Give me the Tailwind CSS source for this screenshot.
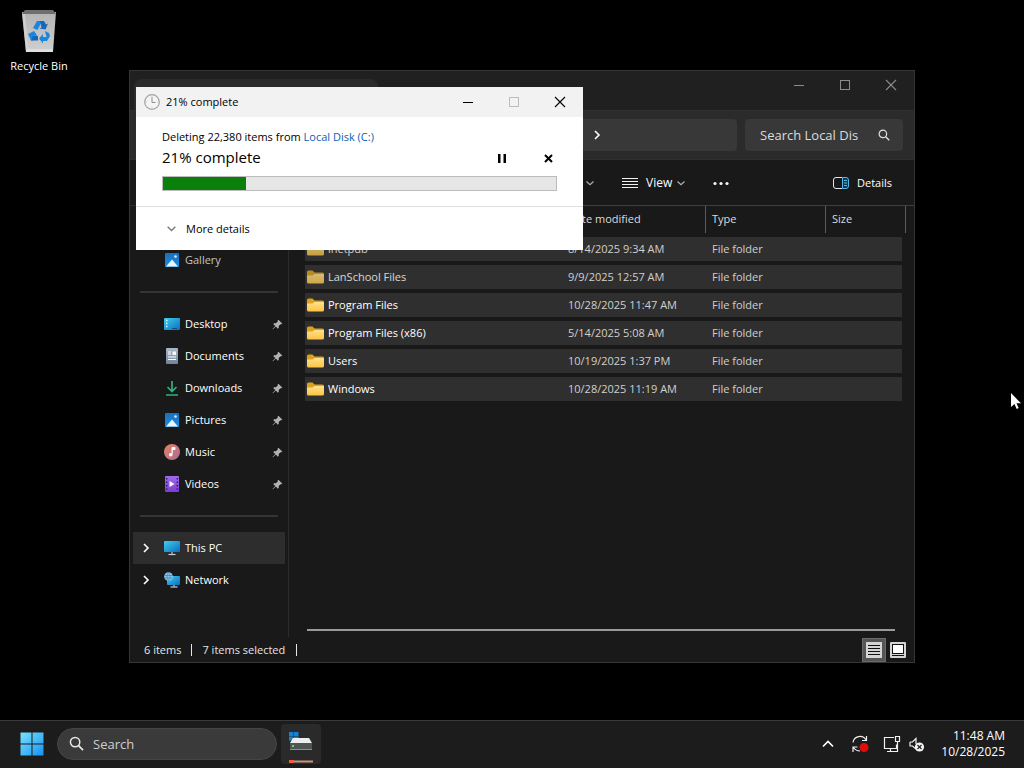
<!DOCTYPE html>
<html lang="en">
<head>
  <meta charset="UTF-8">
  <meta name="viewport" content="width=device-width, initial-scale=1.0">
  <title>Desktop</title>
  <script src="https://cdn.jsdelivr.net/npm/@tailwindcss/browser@4"></script>
</head>
<body class="bg-black text-white font-['Open_Sans','Noto_Sans',sans-serif] text-[11px] leading-4 cursor-default overflow-hidden">

  <!-- Shared icons -->
  <svg width="0" height="0" class="absolute" aria-hidden="true">
    <defs>
      <linearGradient id="g-blue" x1="0" y1="0" x2="1" y2="1"><stop offset="0" stop-color="#3fd0ea"/><stop offset="1" stop-color="#0a6cc4"/></linearGradient>
      <linearGradient id="g-pic" x1="0" y1="0" x2="0" y2="1"><stop offset="0" stop-color="#1a6fc0"/><stop offset="1" stop-color="#1c8fdc"/></linearGradient>
      <linearGradient id="g-doc" x1="0" y1="0" x2="0" y2="1"><stop offset="0" stop-color="#a9b9ca"/><stop offset="1" stop-color="#71839a"/></linearGradient>
      <linearGradient id="g-music" x1="0" y1="0" x2="1" y2="1"><stop offset="0" stop-color="#e8835a"/><stop offset="1" stop-color="#a86a9c"/></linearGradient>
      <linearGradient id="g-video" x1="0" y1="0" x2="0" y2="1"><stop offset="0" stop-color="#a06be8"/><stop offset="1" stop-color="#7a3fd0"/></linearGradient>
      <linearGradient id="g-folder" x1="0" y1="0" x2="0" y2="1"><stop offset="0" stop-color="#ffe08a"/><stop offset="1" stop-color="#fcc445"/></linearGradient>
      <linearGradient id="g-bin" x1="0" y1="0" x2="0" y2="1"><stop offset="0" stop-color="#b4b4b4"/><stop offset="1" stop-color="#cfcfcf"/></linearGradient>
      <linearGradient id="g-start" gradientUnits="userSpaceOnUse" x1="0" y1="0" x2="24" y2="24"><stop offset="0" stop-color="#7be3ff"/><stop offset="1" stop-color="#1391f0"/></linearGradient>
    </defs>
    <symbol id="i-picture" viewBox="0 0 16 16"><rect x="1" y="1" width="14" height="14" rx="1" fill="url(#g-pic)"/><path d="M2 14.500 8 7.500l6 7z" fill="#e6f4ff"/><circle cx="11.500" cy="4.500" r="1.300" fill="#d8eeff"/></symbol>
    <symbol id="i-desktop" viewBox="0 0 16 16"><rect y="2" width="16" height="12" rx="1" fill="url(#g-blue)"/><path d="M2 4.500h1.500M2 7.500h1.500M2 10.500h1.500" stroke="#d9fbff" stroke-width="1.300"/><path d="M8 12.500h5" stroke="#0c4f94" stroke-width="1"/></symbol>
    <symbol id="i-document" viewBox="0 0 16 16"><rect x="2" y="0" width="12" height="16" rx="1" fill="url(#g-doc)"/><path d="M4 4h3M4 6h3M4 9h8M4 11.500h8" stroke="#fff" stroke-width="1.200"/><path d="M8.500 3.500h3.500v3.500H8.500z" fill="#f4f8fc"/></symbol>
    <symbol id="i-download" viewBox="0 0 16 16"><path d="M8 1v10M3.500 7 8 11.500 12.500 7M2 15h12" fill="none" stroke="#2fb280" stroke-width="1.700"/></symbol>
    <symbol id="i-music" viewBox="0 0 16 16"><circle cx="8" cy="8" r="8" fill="url(#g-music)"/><path d="M8 10.500V3.500h3v2H8.800" fill="#fff" stroke="#fff" stroke-width="1"/><circle cx="6.700" cy="10.700" r="1.800" fill="#fff"/></symbol>
    <symbol id="i-video" viewBox="0 0 16 16"><rect x="1" width="14" height="16" rx="1" fill="url(#g-video)"/><path d="M5.500 5v6l5-3z" fill="#fff"/><path d="M2.700 2v12M13.300 2v12" stroke="#3d1a80" stroke-width="1.500" stroke-dasharray="1.600 1.800"/></symbol>
    <symbol id="i-pc" viewBox="0 0 16 16"><rect y="1" width="16" height="11" rx="1" fill="url(#g-blue)"/><path d="M7 12h2v2H7z" fill="#7d8b96"/><path d="M4.500 14.500h7" stroke="#c4ced6" stroke-width="1.200"/></symbol>
    <symbol id="i-network" viewBox="0 0 16 16"><rect x="3" y="4" width="13" height="9" rx="1" fill="url(#g-blue)"/><path d="M9 13h2v1.500H9z" fill="#7d8b96"/><path d="M6.500 15h7" stroke="#c4ced6" stroke-width="1.200"/><circle cx="4.500" cy="4.500" r="4.300" fill="#8cc8ea"/><path d="M1 3.500h7M1 6h7M4.500.500c-2 2.500-2 5.500 0 8M4.500.500c2 2.500 2 5.500 0 8" fill="none" stroke="#2f7fb5" stroke-width=".7"/></symbol>
    <symbol id="i-folder" viewBox="0 0 17 14"><path d="M0 2q0-1.500 1.500-1.500h4L7.500 2.500h8Q17 2.500 17 4v2H0z" fill="#dca21c"/><path d="M0 5.500h5.500l2-1.500H17v8q0 1.500-1.500 1.500h-14Q0 13.500 0 12z" fill="url(#g-folder)"/></symbol>
    <symbol id="i-pin" viewBox="0 0 12 12"><path d="M7 .8 11.200 5l-.9.700-1-.1-2 2.100.1 1.900-.9.900-2.400-2.300L1 11.300l-.5-.5 3.100-3.100L1.300 5.400l.9-.8 2 .1 2.100-2-.1-1.100z" fill="#aeb3b8"/></symbol>
    <symbol id="i-right" viewBox="0 0 10 10"><path d="M3 1l4 4-4 4" fill="none" stroke="currentColor" stroke-width="1.600"/></symbol>
    <symbol id="i-down" viewBox="0 0 10 10"><path d="M1.500 3.500 5 6.800l3.500-3.300" fill="none" stroke="currentColor" stroke-width="1.200"/></symbol>
    <symbol id="i-search" viewBox="0 0 16 16"><circle cx="6.500" cy="6.500" r="5" fill="none" stroke="currentColor" stroke-width="1.600"/><path d="M10.200 10.200 15 15" stroke="currentColor" stroke-width="1.800"/></symbol>
    <symbol id="i-close" viewBox="0 0 12 12"><path d="M1 1l10 10M11 1 1 11" stroke="currentColor" stroke-width="1.100"/></symbol>
    <symbol id="i-max" viewBox="0 0 12 12"><rect x="1.500" y="1.500" width="9" height="9" fill="none" stroke="currentColor"/></symbol>
    <symbol id="i-min" viewBox="0 0 12 12"><path d="M1 6.500h10" stroke="currentColor"/></symbol>
  </svg>

  <div class="h-screen flex flex-col">
    <!-- Desktop -->
    <main class="relative flex-1 min-h-0">
      <button class="absolute left-0 top-2 w-[78px] flex flex-col items-center gap-1">
        <svg class="w-[38px] h-[46px]" viewBox="0 0 38 46">
          <path d="M2 4 36 4 33 44H6z" fill="url(#g-bin)"/>
          <path d="M5 2h28l3 4H2z" fill="#6e6e6e"/>
          <path d="M2 6 6 44H9L5 6z" fill="#d8d8d8" opacity=".6"/>
          <path d="M6 41h27l-.3 3H6.300z" fill="#dedede"/>
          <g fill="#1c86dc">
            <path d="M13 20l4-7h5l-4.500 9z"/><path d="M20 13h4l2 3.500 2-1-2.500 6-6-1 2-1z" fill="#1468b8"/>
            <path d="M8 26l6-3 3.500 5-2-.5-2.500 5H11z"/><path d="M11 32.500h7v-4.500H13z" fill="#1468b8"/>
            <path d="M25 23l4 2 1 3-3 5h-4v2.500l-4-5 4-4.500V29h3.500z"/>
          </g>
        </svg>
        <span>Recycle Bin</span>
      </button>

      <!-- Explorer window -->
      <section class="absolute left-[129px] right-[109px] top-[70px] bottom-[57px] flex flex-col bg-[#191919] border border-[#353535]">
        <header class="h-[39px] shrink-0 flex items-start justify-end bg-[#202020] text-[#8c8c8c] relative">
          <div class="absolute left-1 top-2 bottom-0 w-[244px] rounded-t-lg bg-[#2b2b2b]"></div>
          <button class="w-[46px] h-7 grid place-items-center" aria-label="Minimize"><svg class="size-3"><use href="#i-min"/></svg></button>
          <button class="w-[46px] h-7 grid place-items-center" aria-label="Maximize"><svg class="size-3"><use href="#i-max"/></svg></button>
          <button class="w-[46px] h-7 grid place-items-center" aria-label="Close"><svg class="size-3"><use href="#i-close"/></svg></button>
        </header>

        <div class="h-[49px] shrink-0 flex items-center gap-2 pr-[11px] bg-[#2b2b2b] border-t border-[#303030]">
          <div class="flex-1 h-8 ml-[150px] flex items-center rounded bg-[#383838]">
            <button class="ml-[312px]" aria-label="Expand path"><svg class="size-[10px]"><use href="#i-right"/></svg></button>
          </div>
          <form class="w-[158px] h-8 flex items-center rounded bg-[#383838] pl-[15px] pr-[13px]">
            <input type="text" aria-label="Search Local Disk (C:)" placeholder="Search Local Disk (C:)" class="w-[98px] text-[13px] outline-none placeholder:text-[#dcdcdc]">
            <button type="button" class="ml-auto text-[#e0e0e0]" aria-label="Search"><svg class="w-3 h-3" viewBox="0 0 16 16"><use href="#i-search"/></svg></button>
          </form>
        </div>

        <div class="h-[46px] shrink-0 flex items-center pl-[455px] pr-[22px] border-t border-[#2f2f2f]">
          <svg class="w-[10px] h-[10px] text-[#b0b0b0]"><use href="#i-down"/></svg>
          <button class="ml-[27px] flex items-center">
            <svg class="w-4 h-4" viewBox="0 0 16 16"><path d="M0 3.500h16M0 6.500h16M0 9.500h16M0 12.500h16" stroke="#f0f0f0"/></svg>
            <span class="ml-2 text-[12px]">View</span>
            <svg class="w-[10px] h-[10px] ml-1 text-[#b0b0b0]"><use href="#i-down"/></svg>
          </button>
          <button class="ml-[26px]" aria-label="See more"><svg class="w-[18px] h-4" viewBox="0 0 18 16"><g fill="#f5f5f5"><circle cx="3" cy="8.500" r="1.600"/><circle cx="9" cy="8.500" r="1.600"/><circle cx="15" cy="8.500" r="1.600"/></g></svg></button>
          <button class="ml-auto flex items-center gap-2">
            <svg class="w-4 h-4" viewBox="0 0 16 16"><path d="M9 2.500H3Q.500 2.500.500 5v6Q.500 13.500 3 13.500h6" fill="none" stroke="#e4e4e4"/><path d="M9.500 2.500H13q2.500 0 2.500 2.500v6q0 2.500-2.500 2.500H9.500z" fill="#11384c" stroke="#58b8e8"/><path d="M11 5.500h3M11 8h3M11 10.500h3" stroke="#58b8e8"/></svg>
            <span>Details</span>
          </button>
        </div>

        <div class="flex-1 min-h-0 flex">
          <nav class="w-[159px] shrink-0 pt-[38px] pl-[3px] pr-[3px] border-r border-t border-[#2b2b2b]">
            <a href="#gallery" class="h-8 flex items-center gap-[5px] pl-[31px] text-[#c4c4c4]"><svg class="size-4"><use href="#i-picture"/></svg>Gallery</a>
            <hr class="my-[15px] h-[2px] ml-[7px] mr-[7px] border-0 bg-[#353535]">
            <a href="#desktop" class="h-8 flex items-center gap-[5px] pl-[31px] pr-[2px]"><svg class="size-4"><use href="#i-desktop"/></svg>Desktop<svg class="size-[11px] ml-auto"><use href="#i-pin"/></svg></a>
            <a href="#documents" class="h-8 flex items-center gap-[5px] pl-[31px] pr-[2px]"><svg class="size-4"><use href="#i-document"/></svg>Documents<svg class="size-[11px] ml-auto"><use href="#i-pin"/></svg></a>
            <a href="#downloads" class="h-8 flex items-center gap-[5px] pl-[31px] pr-[2px]"><svg class="size-4"><use href="#i-download"/></svg>Downloads<svg class="size-[11px] ml-auto"><use href="#i-pin"/></svg></a>
            <a href="#pictures" class="h-8 flex items-center gap-[5px] pl-[31px] pr-[2px]"><svg class="size-4"><use href="#i-picture"/></svg>Pictures<svg class="size-[11px] ml-auto"><use href="#i-pin"/></svg></a>
            <a href="#music" class="h-8 flex items-center gap-[5px] pl-[31px] pr-[2px]"><svg class="size-4"><use href="#i-music"/></svg>Music<svg class="size-[11px] ml-auto"><use href="#i-pin"/></svg></a>
            <a href="#videos" class="h-8 flex items-center gap-[5px] pl-[31px] pr-[2px]"><svg class="size-4"><use href="#i-video"/></svg>Videos<svg class="size-[11px] ml-auto"><use href="#i-pin"/></svg></a>
            <hr class="my-[15px] h-[2px] ml-[7px] mr-[7px] border-0 bg-[#353535]">
            <a href="#pc" class="h-8 flex items-center pl-2 bg-[#2d2d2d]"><svg class="size-[10px] mr-[13px]"><use href="#i-right"/></svg><svg class="size-4 mr-[5px]"><use href="#i-pc"/></svg>This PC</a>
            <a href="#network" class="h-8 flex items-center pl-2"><svg class="size-[10px] mr-[13px]"><use href="#i-right"/></svg><svg class="size-4 mr-[5px]"><use href="#i-network"/></svg>Network</a>
          </nav>

          <div class="flex-1 min-w-0 flex flex-col border-t border-[#3f3f3f] pl-4 pr-2">
            <table class="w-full table-fixed -mt-1 border-separate border-spacing-x-0 border-spacing-y-1 text-left">
              <thead>
                <tr class="h-[27px] text-[#dcdcdc] [&>th]:font-normal [&>th]:p-0 [&>th]:pb-[2px] [&>th]:border-r [&>th]:border-[#5a5a5a]">
                  <th class="w-[256px]"><span class="pl-6">Name</span></th>
                  <th class="w-[145px]"><span class="pl-[7px]">Date modified</span></th>
                  <th class="w-[120px]"><span class="pl-[6px]">Type</span></th>
                  <th><span class="pl-[6px]">Size</span></th>
                </tr>
              </thead>
              <tbody class="[&>tr]:h-6 [&_td]:p-0 [&_td]:bg-[#2f2f2f] [&_td]:text-[#cfcfcf] [&_td:last-child]:border-r-4 [&_td:last-child]:border-[#191919]">
                <tr><td><div class="flex items-center gap-1 pl-[2px] opacity-75"><svg class="w-[17px] h-[14px]"><use href="#i-folder"/></svg><span class="text-white">inetpub</span></div></td><td><span class="pl-[7px]">8/14/2025 9:34 AM</span></td><td><span class="pl-[6px]">File folder</span></td><td></td></tr>
                <tr><td><div class="flex items-center gap-1 pl-[2px] opacity-80"><svg class="w-[17px] h-[14px]"><use href="#i-folder"/></svg><span class="text-white">LanSchool Files</span></div></td><td><span class="pl-[7px]">9/9/2025 12:57 AM</span></td><td><span class="pl-[6px]">File folder</span></td><td></td></tr>
                <tr><td><div class="flex items-center gap-1 pl-[2px]"><svg class="w-[17px] h-[14px]"><use href="#i-folder"/></svg><span class="text-white">Program Files</span></div></td><td><span class="pl-[7px]">10/28/2025 11:47 AM</span></td><td><span class="pl-[6px]">File folder</span></td><td></td></tr>
                <tr><td><div class="flex items-center gap-1 pl-[2px]"><svg class="w-[17px] h-[14px]"><use href="#i-folder"/></svg><span class="text-white">Program Files (x86)</span></div></td><td><span class="pl-[7px]">5/14/2025 5:08 AM</span></td><td><span class="pl-[6px]">File folder</span></td><td></td></tr>
                <tr><td><div class="flex items-center gap-1 pl-[2px]"><svg class="w-[17px] h-[14px]"><use href="#i-folder"/></svg><span class="text-white">Users</span></div></td><td><span class="pl-[7px]">10/19/2025 1:37 PM</span></td><td><span class="pl-[6px]">File folder</span></td><td></td></tr>
                <tr><td><div class="flex items-center gap-1 pl-[2px]"><svg class="w-[17px] h-[14px]"><use href="#i-folder"/></svg><span class="text-white">Windows</span></div></td><td><span class="pl-[7px]">10/28/2025 11:19 AM</span></td><td><span class="pl-[6px]">File folder</span></td><td></td></tr>
              </tbody>
            </table>
            <div class="mt-auto mb-[6px] ml-[2px] mr-[11px] h-[2px] bg-[#9a9a9a]"></div>
          </div>
        </div>

        <footer class="h-[25px] shrink-0 flex items-center pl-[14px] pr-1 text-[#e6e6e6]">
          <span>6 items</span>
          <span class="mx-[10px] w-px h-3 bg-[#e6e6e6]"></span>
          <span>7 items selected</span>
          <span class="mx-[11px] w-px h-3 bg-[#e6e6e6]"></span>
          <button class="ml-auto w-6 h-6 grid place-items-center bg-[#555] border border-[#6a6a6a]" aria-label="Details view"><svg class="w-4 h-4" viewBox="0 0 16 16"><rect width="16" height="16" fill="#d4d4d4"/><path d="M2 3.500h12M2 6.500h12M2 9.500h12M2 12.500h12" stroke="#111"/></svg></button>
          <button class="w-6 h-6 grid place-items-center" aria-label="Large icons view"><svg class="w-4 h-4" viewBox="0 0 16 16"><rect width="16" height="16" rx="1" fill="#d4d4d4"/><rect x="2.500" y="2.500" width="11" height="9" fill="#fff" stroke="#111"/><path d="M2 13.500h12" stroke="#111"/></svg></button>
        </footer>
      </section>

      <!-- Delete progress dialog -->
      <section role="dialog" aria-label="21% complete" class="absolute left-[136px] top-[87px] w-[447px] bg-white text-black">
        <header class="h-[30px] flex items-center pl-2 bg-[#f2f2f2]">
          <svg class="size-4" viewBox="0 0 16 16"><circle cx="8" cy="8" r="7.300" fill="#f4f4f4" stroke="#a3a3a3" stroke-width="1.200"/><path d="M8 3v5.500h3.500" fill="none" stroke="#8f8f8f"/><path d="M8 1.500v1M8 13.500v1M1.500 8h1M13.500 8h1" stroke="#b5b5b5"/></svg>
          <span class="ml-[6px]">21% complete</span>
          <button class="ml-auto w-[46px] h-[30px] grid place-items-center" aria-label="Minimize"><svg class="size-3"><use href="#i-min"/></svg></button>
          <button class="w-[46px] h-[30px] grid place-items-center text-[#bdbdbd]" aria-label="Maximize" disabled><svg class="size-3"><use href="#i-max"/></svg></button>
          <button class="w-[46px] h-[30px] grid place-items-center" aria-label="Close"><svg class="size-3"><use href="#i-close"/></svg></button>
        </header>
        <div class="pl-[26px] pr-[26px] pt-3 pb-[15px]">
          <p>Deleting 22,380 items from <a href="#disk" class="text-[#0a5fb4]">Local Disk (C:)</a></p>
          <div class="flex items-center h-[26px]">
            <label for="progress" class="text-[15px] leading-5 pb-[2px]">21% complete</label>
            <button class="ml-auto w-[46px] grid place-items-center" aria-label="Pause"><svg class="w-2 h-[9px]" viewBox="0 0 8 9"><path d="M0 0h2.500v9H0zM5.500 0H8v9H5.500z"/></svg></button>
            <button class="w-[46px] -mr-[14px] grid place-items-center" aria-label="Cancel"><svg class="size-[9px]" viewBox="0 0 9 9"><path d="M1 1l7 7M8 1 1 8" stroke="#000" stroke-width="2"/></svg></button>
          </div>
          <progress id="progress" value="21" max="100" class="mt-[5px] block w-full h-[15px] appearance-none border border-[#bcbcbc] bg-[#e6e6e6] [&::-webkit-progress-bar]:bg-[#e6e6e6] [&::-webkit-progress-value]:bg-[#0a800a]">21%</progress>
        </div>
        <footer class="h-11 flex items-center pl-[30px] border-t border-[#dfdfdf]">
          <button class="flex items-center gap-[9px]"><svg class="size-[11px] text-[#777]"><use href="#i-down"/></svg>More details</button>
        </footer>
      </section>

      <!-- Mouse pointer -->
      <svg class="absolute right-[2px] top-[392px] w-3 h-[18px]" viewBox="0 0 12 18"><path d="M1 1v14l3.500-3 2.200 5 2-.9-2.200-4.800H11z" fill="#fff"/></svg>
    </main>

    <!-- Taskbar -->
    <footer class="h-12 shrink-0 flex items-center pl-5 pr-[19px] pb-[2px] bg-[#1c1c1c] border-t border-[#3a3a3a]">
      <button aria-label="Start"><svg class="size-6" viewBox="0 0 24 24"><path d="M.500.500h11v11H.500zM12.500.500h11v11h-11zM.500 12.500h11v11H.500zM12.500 12.500h11v11h-11z" fill="url(#g-start)"/></svg></button>
      <label class="ml-[13px] w-[220px] h-8 flex items-center gap-[9px] pl-[11px] rounded-full bg-[#3a3a3a] border border-[#454545]">
        <svg class="w-[15px] h-[15px] text-[#e8e8e8]" viewBox="0 0 16 16"><use href="#i-search"/></svg>
        <input type="text" placeholder="Search" aria-label="Search" class="w-[150px] text-[13px] outline-none placeholder:text-[#cfcfcf]">
      </label>
      <button class="ml-1 w-10 h-10 grid place-items-center rounded bg-[#2a2a2a]" aria-label="File Explorer">
        <svg class="w-6 h-10" viewBox="0 0 24 40">
          <path d="M0 8h4.500v4H0zM5 8h4.500v4H5zM0 12.500h4.500v4H0zM5 12.500h4.500v4H5z" fill="#1582d4"/>
          <path d="M4 14h16l3 5H1z" fill="#ededed"/><path d="M1 19h22v6H1z" fill="#4e5554"/><path d="M3 21h2v2H3z" fill="#6fcf70"/>
          <path d="M1 25.500h22" stroke="#8b8f90"/>
          <path d="M0 37.500h24" stroke="#c9937e" stroke-width="2"/><path d="M0 37.500h5" stroke="#ff5a36" stroke-width="3"/>
        </svg>
      </button>
      <div class="ml-auto flex items-center">
        <button aria-label="Show hidden icons"><svg class="w-3 h-3" viewBox="0 0 12 12"><path d="M1 8.500 6 3.500l5 5" fill="none" stroke="#fff" stroke-width="1.600"/></svg></button>
        <button class="ml-[17px]" aria-label="Update status"><svg class="w-[18px] h-[18px]" viewBox="0 0 18 18"><path d="M2 7.500A7 7 0 0 1 15 5M15.500 1v4.500H11M2 17v-5h4.500M2.500 12.500Q5 16 9 16" fill="none" stroke="#f0f0f0" stroke-width="1.200"/><circle cx="13" cy="12.500" r="4.500" fill="#e00b0b"/></svg></button>
        <button class="ml-[14px]" aria-label="Network"><svg class="w-[18px] h-[18px]" viewBox="0 0 18 18"><path d="M11 2.500H1.500v11h12v-4M4 16.500h8M7.500 13.500v3M12.500 1.500h4v5h-4zM14.500 6.500v10h-2.500" fill="none" stroke="#f0f0f0" stroke-width="1.200"/></svg></button>
        <button class="ml-[8px]" aria-label="Volume muted"><svg class="w-4 h-[18px]" viewBox="0 0 16 18"><path d="M1 7v4h2.500L7 14M1 7h2.500L7 3.500V9" fill="none" stroke="#f0f0f0" stroke-width="1.200"/><circle cx="10.500" cy="12" r="4.600" fill="#f4f4f4"/><path d="M8.500 10l4 4M12.500 10l-4 4" stroke="#222" stroke-width="1.200"/></svg></button>
        <button class="ml-4 text-right text-[12px] leading-4"><span class="block">11:48 AM</span><span class="block">10/28/2025</span></button>
      </div>
    </footer>
  </div>
</body>
</html>
